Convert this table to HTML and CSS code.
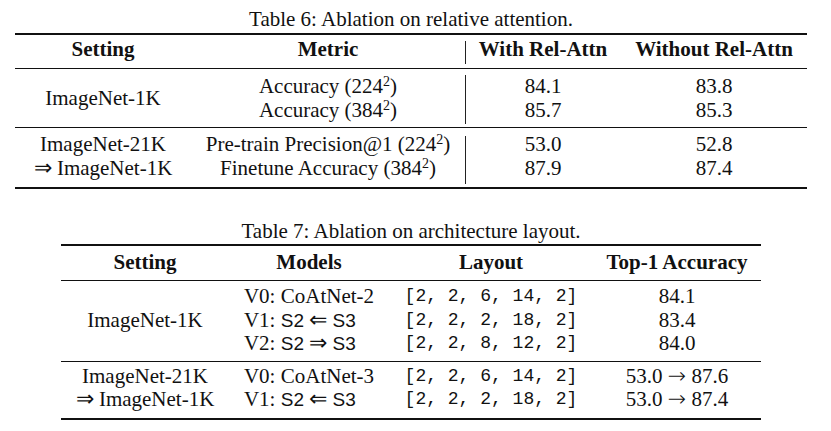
FILE: index.html
```html
<!DOCTYPE html>
<html>
<head>
<meta charset="utf-8">
<link rel="stylesheet" href="styles.css">
</head>
<body>
<div class="page">
  <div class="block">
    <div class="caption">Table 6: Ablation on relative attention.</div>
    <table class="tbl t6">
      <colgroup><col class="c1"><col class="c2"><col class="c3"><col class="c4"></colgroup>
      <thead>
        <tr>
          <th>Setting</th>
          <th>Metric</th>
          <th class="sep sep-h">With Rel-Attn</th>
          <th>Without Rel-Attn</th>
        </tr>
      </thead>
      <tbody class="g1">
        <tr>
          <td>ImageNet-1K</td>
          <td>Accuracy (224<sup class="sq">2</sup>)<br>Accuracy (384<sup class="sq">2</sup>)</td>
          <td class="sep sep-b1">84.1<br>85.7</td>
          <td>83.8<br>85.3</td>
        </tr>
      </tbody>
      <tbody class="g2">
        <tr>
          <td>ImageNet-21K<br><span class="ar">⇒</span> ImageNet-1K</td>
          <td>Pre-train Precision@1 (224<sup class="sq">2</sup>)<br>Finetune Accuracy (384<sup class="sq">2</sup>)</td>
          <td class="sep sep-b2">53.0<br>87.9</td>
          <td>52.8<br>87.4</td>
        </tr>
      </tbody>
    </table>
  </div>

  <div class="block b7">
    <div class="caption">Table 7: Ablation on architecture layout.</div>
    <table class="tbl t7">
      <colgroup><col class="d1"><col class="d2"><col class="d3"><col class="d4"></colgroup>
      <thead>
        <tr>
          <th>Setting</th>
          <th>Models</th>
          <th>Layout</th>
          <th>Top-1 Accuracy</th>
        </tr>
      </thead>
      <tbody class="h1">
        <tr>
          <td>ImageNet-1K</td>
          <td><div class="models">V0: CoAtNet-2<br>V1: <span class="sf">S2</span> <span class="ar">⇐</span> <span class="sf">S3</span><br>V2: <span class="sf">S2</span> <span class="ar">⇒</span> <span class="sf">S3</span></div></td>
          <td class="mono">[2, 2, 6, 14, 2]<br>[2, 2, 2, 18, 2]<br>[2, 2, 8, 12, 2]</td>
          <td>84.1<br>83.4<br>84.0</td>
        </tr>
      </tbody>
      <tbody class="h2">
        <tr>
          <td>ImageNet-21K<br><span class="ar">⇒</span> ImageNet-1K</td>
          <td><div class="models">V0: CoAtNet-3<br>V1: <span class="sf">S2</span> <span class="ar">⇐</span> <span class="sf">S3</span></div></td>
          <td class="mono">[2, 2, 6, 14, 2]<br>[2, 2, 2, 18, 2]</td>
          <td>53.0 <span class="ar sm">→</span> 87.6<br>53.0 <span class="ar sm">→</span> 87.4</td>
        </tr>
      </tbody>
    </table>
  </div>
</div>
</body>
</html>
```

FILE: styles.css
```css
html, body {
  margin: 0;
  padding: 0;
  background: #ffffff;
}

body {
  font-family: "Liberation Serif", "Times New Roman", serif;
  font-size: 21px;
  color: #111;
  width: 831px;
  height: 431px;
  overflow: hidden;
}

.page {
  width: 822px;
  padding-top: 8px;
  display: flex;
  flex-direction: column;
  align-items: center;
}

.block {
  display: flex;
  flex-direction: column;
  align-items: center;
}

.b7 {
  margin-top: 31px;
}

.caption {
  line-height: 23px;
  margin-bottom: 2px;
  white-space: nowrap;
}

.b7 .caption {
  margin-bottom: 1px;
}

.tbl {
  border-collapse: collapse;
  table-layout: fixed;
  border-top: 2px solid #111;
  border-bottom: 2px solid #111;
}

.tbl th,
.tbl td {
  padding: 0;
  text-align: center;
  vertical-align: middle;
  white-space: nowrap;
  line-height: 23.5px;
}

.tbl th {
  font-weight: bold;
  line-height: 23px;
}

.tbl thead tr {
  border-bottom: 1px solid #111;
}

.tbl tbody + tbody tr {
  border-top: 1px solid #111;
}

/* Table 6 geometry */
.t6 { width: 792px; }
.c1 { width: 176px; }
.c2 { width: 274px; }
.c3 { width: 156px; }
.c4 { width: 186px; }

.t6 th { padding: 3px 0 7px; }
.t6 .g1 td { padding: 6px 0 5px; }
.t6 .g2 td { padding: 5px 0 7px; }

.sep {
  background-image: linear-gradient(#222, #222);
  background-repeat: no-repeat;
  background-size: 1px calc(100% - 10px);
  background-position: 0 6px;
}
.sep-b1 {
  background-size: 1px calc(100% - 9px);
  background-position: 0 6px;
}
.sep-b2 {
  background-size: 1px calc(100% - 11px);
  background-position: 0 8px;
}

/* Table 7 geometry */
.t7 { width: 700px; }
.d1 { width: 168px; }
.d2 { width: 160px; }
.d3 { width: 204px; }
.d4 { width: 168px; }

.t7 th { padding: 5px 0 6px; }
.t7 .h1 td { padding: 4px 0 5px; }
.t7 .h2 td { padding: 3px 0 6px; }

.models {
  display: inline-block;
  text-align: left;
}

.mono {
  font-family: "Liberation Mono", "Courier New", monospace;
  font-size: 18px;
}

.sf {
  font-family: "Liberation Sans", Arial, sans-serif;
  font-size: 19px;
}

.ar {
  font-family: "DejaVu Sans", sans-serif;
  font-size: 22px;
  line-height: 0;
  font-weight: 300;
}

.ar.sm {
  font-size: 22px;
}

.sq {
  font-size: 14px;
  line-height: 0;
  vertical-align: 7px;
}
```
